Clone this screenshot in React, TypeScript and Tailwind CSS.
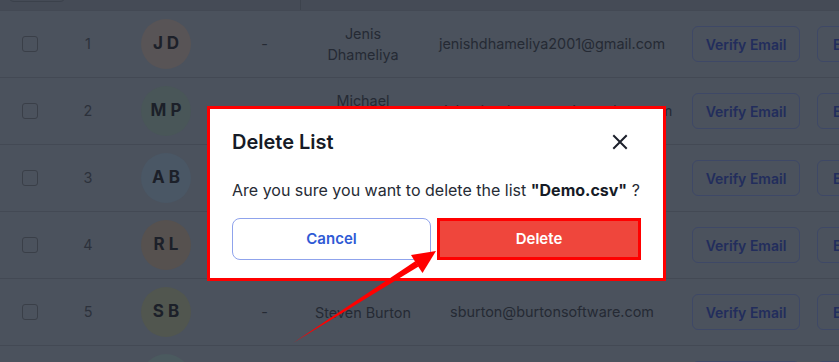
import React from "react";

type Row = {
  n: number;
  initials: string;
  avatar: string;
  name: string;
  email: string;
};

const rows: Row[] = [
  { n: 1, initials: "J D", avatar: "bg-[#585456]", name: "Jenis Dhameliya", email: "jenishdhameliya2001@gmail.com" },
  { n: 2, initials: "M P", avatar: "bg-[#495658]", name: "Michael Parker", email: "michaelparker@sunrisetechno.com" },
  { n: 3, initials: "A B", avatar: "bg-[#4a5765]", name: "Anna Brooks", email: "annabrooks@example.com" },
  { n: 4, initials: "R L", avatar: "bg-[#56514f]", name: "Ryan Lewis", email: "ryanlewis@example.com" },
  { n: 5, initials: "S B", avatar: "bg-[#51564f]", name: "Steven Burton", email: "sburton@burtonsoftware.com" },
  { n: 6, initials: "K T", avatar: "bg-[#4b5a5f]", name: "Kevin Turner", email: "kturner@example.com" },
];

function TableRow({ r }: { r: Row }) {
  return (
    <div className="flex h-[67px] shrink-0 items-center border-b border-[#434954] bg-[#4b525d] text-[14.4px] text-[#252a34]">
      <div className="flex w-[60px] shrink-0 justify-center">
        <div className="h-[16px] w-[16px] rounded-[3px] border border-[#3a3f48]" />
      </div>
      <div className="w-[56px] shrink-0 text-center text-[#2c313b]">{r.n}</div>
      <div className="flex w-[100px] shrink-0 justify-center">
        <div className={`flex h-[50px] w-[50px] items-center justify-center rounded-full ${r.avatar} text-[17px] font-bold text-[#1c2029]`}>
          {r.initials}
        </div>
      </div>
      <div className="w-[97px] shrink-0 text-center">-</div>
      <div className="w-[100px] shrink-0 text-center leading-[21px]">{r.name}</div>
      <div className="w-[278px] shrink-0 whitespace-nowrap text-center">{r.email}</div>
      <div className="ml-px flex shrink-0 gap-[17px]">
        <div className="flex h-[36px] w-[108px] items-center justify-center rounded-md border border-[#3e4866] text-[14px] font-semibold text-[#222d5c]">
          Verify Email
        </div>
        <div className="flex h-[36px] w-[60px] items-center justify-start rounded-md border border-[#3e4866] pl-[15px] text-[14px] font-semibold text-[#222d5c]">
          Edit
        </div>
      </div>
    </div>
  );
}

export default function App() {
  return (
    <div
      className="relative h-[362px] w-[839px] overflow-hidden bg-[#4b525d]"
      style={{ fontFamily: "Inter, 'Noto Sans', sans-serif" }}
    >
      <div className="flex h-[11px] shrink-0 overflow-hidden border-b border-[#434954] bg-[#454b56]">
        <div className="ml-[8px] -mt-[30px] h-[32px] w-[58px] rounded-md border border-[#3b414b]" />
        <div className="ml-[234px] h-full w-px bg-[#3d434d]" />
      </div>
      <div className="flex flex-col">
        {rows.map((r) => (
          <TableRow key={r.n} r={r} />
        ))}
      </div>

      {/* Modal */}
      <div className="absolute left-[207px] top-[106px] w-[459px] border-[3px] border-[#ff0000] bg-white">
        <div className="px-[22px] pb-[18px] pt-[19px]">
          <div className="flex h-[28px] items-center justify-between">
            <div className="text-[20px] font-semibold leading-[28px] text-[#161b26]">Delete List</div>
            <svg width="16" height="16" viewBox="0 0 16 16" className="mr-[13px]">
              <path d="M2 2 L14 14 M14 2 L2 14" stroke="#1b1f2a" strokeWidth="2" strokeLinecap="square" />
            </svg>
          </div>
          <div className="mt-[22px] text-[16px] leading-[24px] text-[#262b35]">
            Are you sure you want to delete the list <span className="font-bold text-[#161b26]">"Demo.csv"</span> ?
          </div>
          <div className="mt-4 flex gap-[6px]">
            <div className="flex h-[42px] flex-1 items-center justify-center rounded-lg border border-[#8fa3ec] text-[15px] font-semibold text-[#2f5ad5]">
              Cancel
            </div>
            <div className="flex h-[42px] w-[204px] items-center justify-center border-[3px] border-[#ff0000] bg-[#ef463c] text-[15px] font-semibold text-white">
              Delete
            </div>
          </div>
        </div>
      </div>

      {/* Arrow annotation */}
      <svg className="pointer-events-none absolute left-0 top-0" width="839" height="362">
        <polygon points="293,343 418.6,266.4 415.2,261.2" fill="#ff0000" />
        <polygon points="436,251 422.5,273 416.5,264 411,255" fill="#ff0000" />
      </svg>
    </div>
  );
}
